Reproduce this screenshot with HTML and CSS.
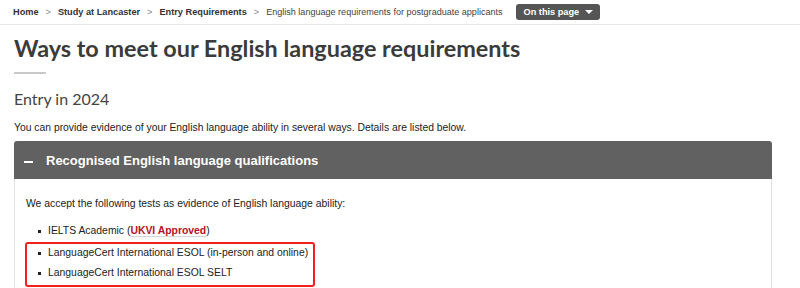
FILE: index.html
```html
<!DOCTYPE html>
<html lang="en">
<head>
<meta charset="utf-8">
<title>Ways to meet our English language requirements</title>
<link rel="stylesheet" href="styles.css">
</head>
<body>
<nav class="crumbs">
  <a class="crumb" href="#">Home</a><span class="sep">&gt;</span>
  <a class="crumb" href="#">Study at Lancaster</a><span class="sep">&gt;</span>
  <a class="crumb" href="#">Entry Requirements</a><span class="sep">&gt;</span>
  <span class="current">English language requirements for postgraduate applicants</span>
  <button class="otp">On this page <span class="caret"></span></button>
</nav>
<main class="content">
  <h1 class="title">Ways to meet our English language requirements</h1>
  <div class="rule"></div>
  <h2 class="sub">Entry in 2024</h2>
  <p class="intro">You can provide evidence of your English language ability in several ways. Details are listed below.</p>
  <section class="acc">
    <div class="acc-head"><span class="minus"></span><span class="acc-title">Recognised English language qualifications</span></div>
    <div class="acc-body">
      <p class="lead">We accept the following tests as evidence of English language ability:</p>
      <ul class="tests first">
        <li><span>IELTS Academic (<a class="ukvi" href="#">UKVI Approved</a>)</span></li>
      </ul>
      <div class="hl">
        <ul class="tests inner">
          <li>LanguageCert International ESOL (in-person and online)</li>
          <li>LanguageCert International ESOL SELT</li>
        </ul>
      </div>
    </div>
  </section>
</main>
</body>
</html>
```
FILE: styles.css
```css
html, body { margin: 0; padding: 0; background: #fff; }
body { font-family: "Liberation Sans", Arial, sans-serif; color: #222; width: 800px; height: 288px; overflow: hidden; }

.crumbs {
  display: flex; align-items: center;
  height: 24px; border-bottom: 1px solid #e6e6e6;
  padding-left: 13px; font-size: 9.2px;
}
.crumb { color: #333; font-weight: bold; text-decoration: none; }
.sep { color: #888; margin: 0 7px 0 7px; }
.current { color: #444; font-size: 9.05px; }
.otp {
  margin-left: 13px; height: 16px; padding: 0 7px 0 8px;
  background: #555; color: #fff; border: 0; border-radius: 3px;
  font-family: "Liberation Sans", Arial, sans-serif; font-size: 9.2px; font-weight: bold;
  display: flex; align-items: center; gap: 6px;
}
.caret { width: 0; height: 0; border-left: 4px solid transparent; border-right: 4px solid transparent; border-top: 4px solid #fff; }

.content { padding: 0 28px 0 14px; }
.title {
  font-family: Lato, "Open Sans", sans-serif; font-weight: 700; font-size: 23.4px;
  color: #3b3b3b; margin: 8px 0 0 0; line-height: 30px;
}
.rule { width: 32px; height: 2px; background: #c8c8c8; margin-top: 9px; }
.sub { font-family: Lato, sans-serif; font-weight: 400; font-size: 16px; color: #444; margin: 15px 0 0 0; line-height: 20px; }
.intro { font-size: 10.35px; margin: 12px 0 0 0; line-height: 14px; color: #222; }

.acc { margin-top: 6px; width: 758px; }
.acc-head {
  height: 38px; background: #616161; border-radius: 3px 3px 0 0;
  display: flex; align-items: center; padding-left: 10px;
}
.minus { width: 9px; height: 2px; background: #fff; margin-right: 13px; margin-top: 3px; }
.acc-title { color: #fff; font-family: "Liberation Sans", Arial, sans-serif; font-weight: bold; font-size: 13px; }
.acc-body { border: 1px solid #e2e2e2; border-top: 0; padding: 18px 11px 10px 11px; }
.lead { font-size: 10.4px; margin: 0; line-height: 14px; color: #222; }
.tests { list-style: none; margin: 0; padding: 0; font-size: 10.4px; color: #222; }
.tests li { line-height: 14px; display: flex; align-items: center; }
.tests li::before { content: ""; width: 3px; height: 3px; background: #222; margin-right: 7px; flex: none; }
.first { margin-top: 13px; padding-left: 12px; }
.ukvi { color: #b5121b; font-weight: bold; text-decoration: none; border-bottom: 1px solid #d6d6d6; }
.hl {
  box-sizing: border-box; width: 290px; margin: 4px 0 0 -1px;
  border: 2px solid #f0211d; border-radius: 3px; padding: 2px 0 5px 0;
}
.inner { padding-left: 11px; }
.inner li + li { margin-top: 6px; }
```
